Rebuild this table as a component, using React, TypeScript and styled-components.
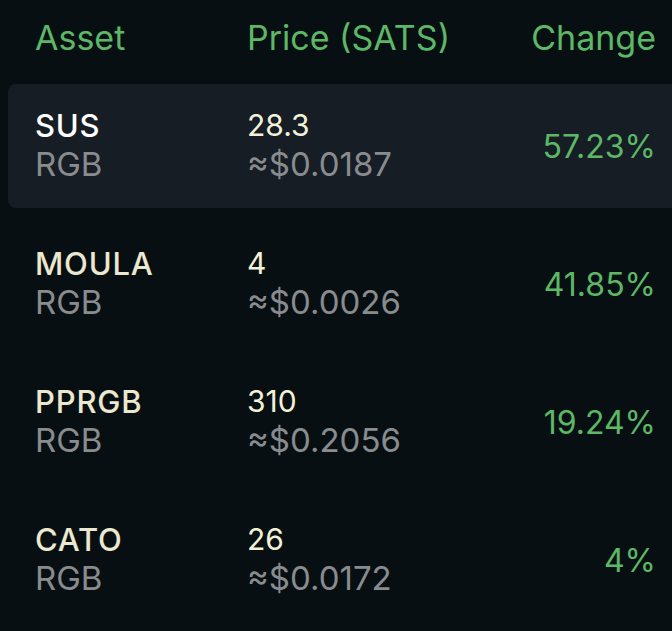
import React from 'react';
import styled, { createGlobalStyle } from 'styled-components';

const GlobalStyle = createGlobalStyle`
  html, body {
    margin: 0;
    padding: 0;
    background: #080f12;
    overflow: hidden;
  }
  body {
    font-family: Inter, "Noto Sans", sans-serif;
  }
`;

const Page = styled.div`
  width: 672px;
  height: 631px;
  background: #080f12;
  padding-left: 8px;
  box-sizing: border-box;
  overflow: hidden;
`;

const HeaderRow = styled.div`
  display: grid;
  grid-template-columns: 212px 1fr auto;
  align-items: center;
  height: 84px;
  padding: 0 16px 0 27px;
  box-sizing: border-box;
`;

const HeaderCell = styled.div<{ right?: boolean }>`
  color: #5cb866;
  font-size: 34px;
  font-weight: 400;
  text-align: ${(p) => (p.right ? 'right' : 'left')};
  padding-bottom: 10px;
`;

const List = styled.div`
  display: flex;
  flex-direction: column;
  gap: 14px;
  margin-right: -12px;
`;

const Row = styled.div<{ active?: boolean }>`
  display: grid;
  grid-template-columns: 212px 1fr auto;
  align-items: center;
  height: 124px;
  padding: 0 28px 0 27px;
  box-sizing: border-box;
  border-radius: 8px;
  background: ${(p) => (p.active ? '#161d24' : 'transparent')};
`;

const Stack = styled.div`
  display: flex;
  flex-direction: column;
`;

const Primary = styled.div<{ white?: boolean }>`
  color: ${(p) => (p.white ? '#ffffff' : '#ebe8cf')};
  font-size: 31px;
  font-weight: 500;
  letter-spacing: 0.8px;
  line-height: 37px;
`;

const Secondary = styled.div`
  color: #898c8f;
  font-size: 33px;
  font-weight: 400;
  line-height: 41px;
`;

const PriceMain = styled.div`
  color: #f4f1d9;
  font-size: 30px;
  font-weight: 400;
  line-height: 37px;
`;

const Change = styled.div`
  color: #5cb866;
  font-size: 32px;
  font-weight: 400;
  text-align: right;
`;

const assets = [
  { name: 'SUS', price: '28.3', usd: '≈$0.0187', change: '57.23%' },
  { name: 'MOULA', price: '4', usd: '≈$0.0026', change: '41.85%' },
  { name: 'PPRGB', price: '310', usd: '≈$0.2056', change: '19.24%' },
  { name: 'CATO', price: '26', usd: '≈$0.0172', change: '4%' },
];

export default function App() {
  return (
    <Page>
      <GlobalStyle />
      <HeaderRow>
        <HeaderCell>Asset</HeaderCell>
        <HeaderCell>Price (SATS)</HeaderCell>
        <HeaderCell right>Change</HeaderCell>
      </HeaderRow>
      <List>
        {assets.map((a, i) => (
          <Row key={a.name} active={i === 0}>
            <Stack>
              <Primary white={i === 0}>{a.name}</Primary>
              <Secondary>RGB</Secondary>
            </Stack>
            <Stack>
              <PriceMain>{a.price}</PriceMain>
              <Secondary>{a.usd}</Secondary>
            </Stack>
            <Change>{a.change}</Change>
          </Row>
        ))}
      </List>
    </Page>
  );
}
